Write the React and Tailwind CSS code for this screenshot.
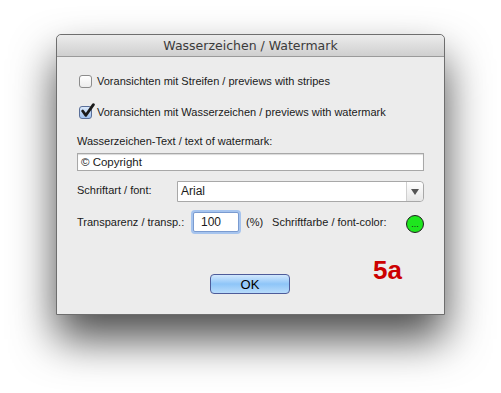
import React, { useState } from 'react';

const Checkbox = ({ checked }) => (
  <span
    className={
      'flex h-[13px] w-[13px] shrink-0 items-center justify-center rounded-[3px] border ' +
      (checked
        ? 'border-[#5a6f99] bg-gradient-to-b from-[#dbe9fb] to-[#9fc1ef]'
        : 'border-[#8c8c8c] bg-gradient-to-b from-[#ffffff] to-[#ececec]')
    }
  >
    {checked && (
      <svg width="15" height="15" viewBox="0 0 14 14" className="-mt-[4px] ml-[3px] shrink-0">
        <path d="M2.5 7.5 L5.5 11.5 L12.5 1.5" fill="none" stroke="#1b1b1b" strokeWidth="2.6" strokeLinecap="round" strokeLinejoin="round" />
      </svg>
    )}
  </span>
);

const App = () => {
  const [stripes, setStripes] = useState(false);
  const [watermark, setWatermark] = useState(true);

  return (
    <div className="h-[393px] w-[501px] bg-white pl-[56px] pt-[34px] font-['Liberation_Sans',Arial,sans-serif] text-[11px] leading-[15px] text-[#1a1a1a]">
      <div className="flex h-[281px] w-[389px] flex-col rounded-t-[5px] border border-[#6e6e6e] bg-[#ececec] shadow-[0_24px_44px_rgba(0,0,0,0.7)]">
        {/* Titelleiste */}
        <div className="flex h-[22px] shrink-0 items-center justify-center rounded-t-[5px] border-b border-[#9a9a9a] bg-gradient-to-b from-[#ececec] to-[#cfcfcf] font-['DejaVu_Sans',sans-serif] text-[12.5px] text-[#3b3b3b]">
          Wasserzeichen / Watermark
        </div>

        <div className="flex flex-1 flex-col px-[20px]">
          <label className="mt-[17px] ml-[2px] flex items-center gap-[5px]" onClick={() => setStripes(!stripes)}>
            <Checkbox checked={stripes} />
            <span>Voransichten mit Streifen / previews with stripes</span>
          </label>

          <label className="mt-[16px] ml-[2px] flex items-center gap-[5px]" onClick={() => setWatermark(!watermark)}>
            <Checkbox checked={watermark} />
            <span>Voransichten mit Wasserzeichen / previews with watermark</span>
          </label>

          <div className="mt-[14px]">Wasserzeichen-Text / text of watermark:</div>
          <div className="mt-[4px] flex h-[18px] items-center border border-[#a8a8a8] bg-white px-[3px] text-[11.5px] shadow-[inset_0_1px_1px_rgba(0,0,0,0.15)]">
            © Copyright
          </div>

          <div className="mt-[10px] flex items-start">
            <div className="w-[100px] pt-[2px]">Schriftart / font:</div>
            <div className="flex h-[21px] flex-1 items-stretch rounded-r-[4px] border border-[#a8a8a8] bg-white">
              <span className="flex flex-1 items-center pl-[3px] text-[12px]">Arial</span>
              <span className="flex w-[17px] items-center justify-center rounded-r-[4px] border-l border-[#d0d0d0] bg-gradient-to-b from-[#ffffff] to-[#e6e6e6]">
                <svg width="8" height="6" viewBox="0 0 8 6">
                  <path d="M0 0 L8 0 L4 6 Z" fill="#555" />
                </svg>
              </span>
            </div>
          </div>

          <div className="mt-[10px] flex items-center">
            <div className="w-[116px]">Transparenz / transp.:</div>
            <div className="flex h-[20px] w-[46px] items-center rounded-[2px] border border-[#7a9bd0] bg-white pl-[7px] text-[12px] shadow-[0_0_0_2px_#a6c4ee]">
              100
            </div>
            <span className="ml-[7px]">(%)</span>
            <span className="ml-[9px]">Schriftfarbe / font-color:</span>
            <span className="ml-auto -mb-[4px] flex h-[18px] w-[18px] items-center justify-center rounded-full border border-[#1f1f1f] bg-[#1ee61e] text-[9px] leading-none">
              ...
            </span>
          </div>

          <div className="mt-[42px] flex items-start">
            <div className="ml-[133px] flex h-[20px] w-[80px] items-center justify-center rounded-[4px] border border-[#4e5c9a] bg-gradient-to-b from-[#d2e8fd] via-[#8ec5f8] to-[#b8dcfb] text-[13px] text-black">
              OK
            </div>
            <div className="ml-auto -mt-[17px] mr-[22px] text-[26px] font-bold leading-none text-[#cc0000]">5a</div>
          </div>
        </div>
      </div>
    </div>
  );
};

export default App;
